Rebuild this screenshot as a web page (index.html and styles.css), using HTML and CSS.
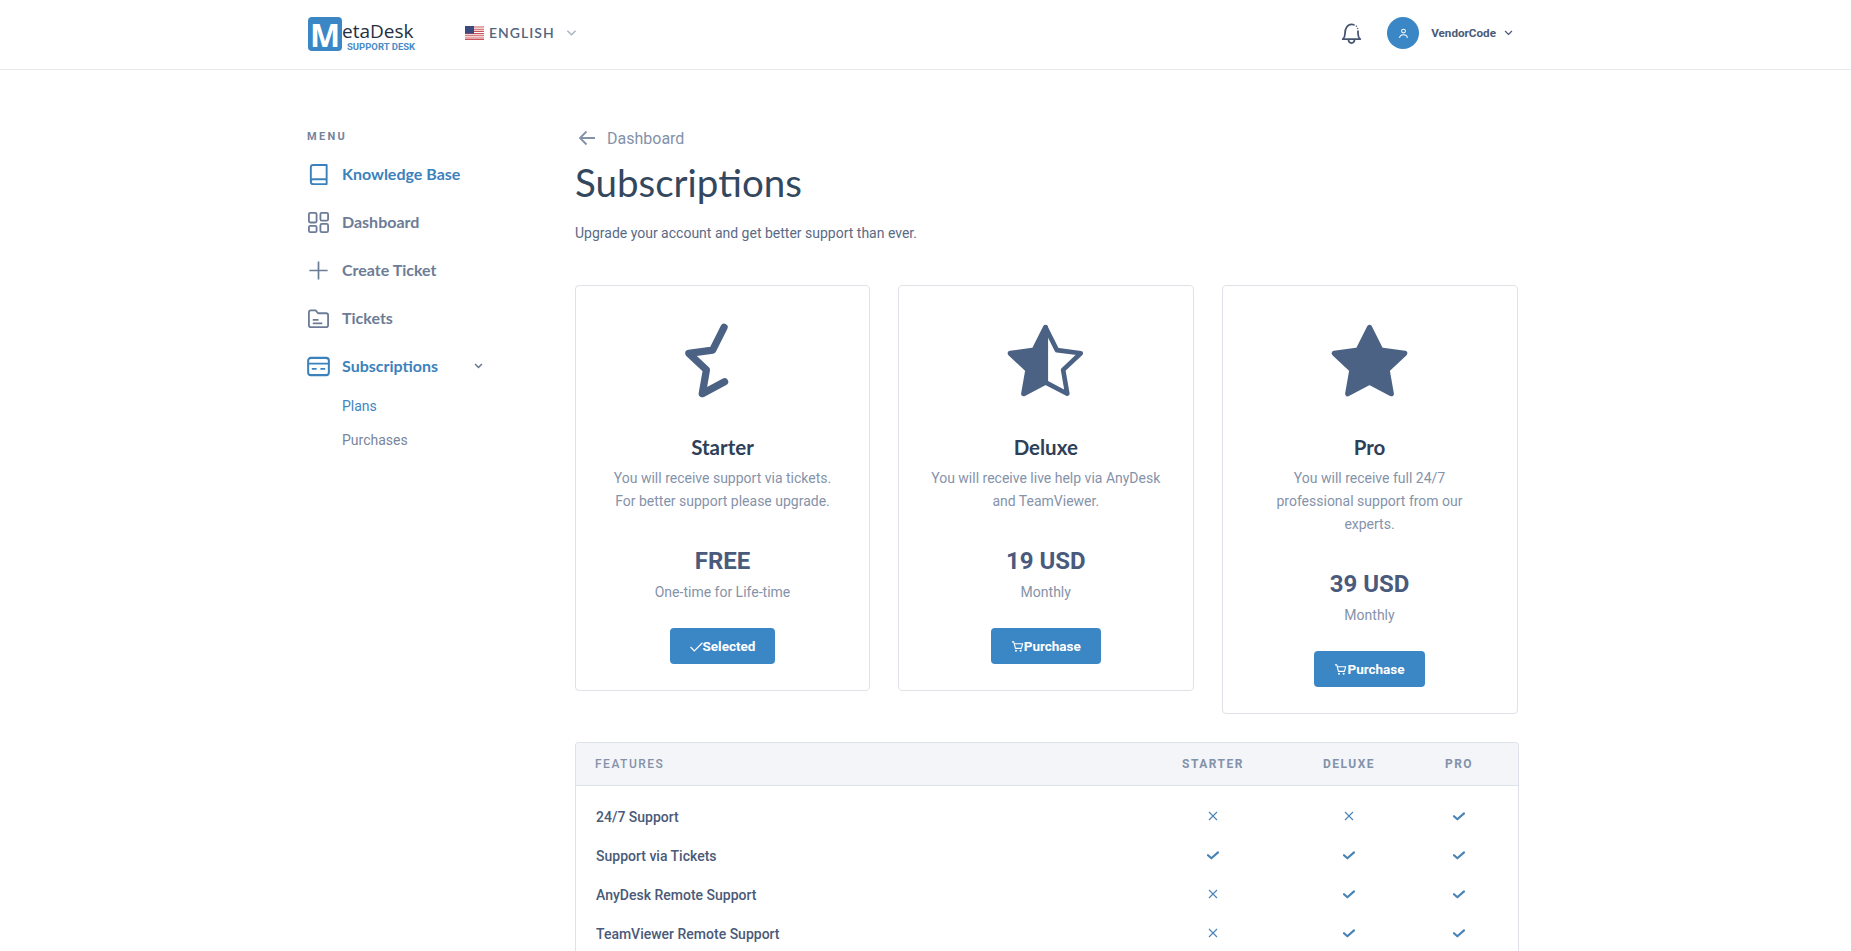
FILE: index.html
```html
<!DOCTYPE html>
<html lang="en">
<head>
<meta charset="utf-8">
<title>Subscriptions</title>
<link rel="stylesheet" href="styles.css">
</head>
<body>
<svg class="defs" width="0" height="0" aria-hidden="true">
  <symbol id="i-x" viewBox="0 0 12 12"><path d="M2 2l8 8M10 2l-8 8" fill="none" stroke="currentColor" stroke-width="1.100"/></symbol>
  <symbol id="i-c" viewBox="0 0 12 12"><path d="M1 6.200l3.400 3.100L11 3.400" fill="none" stroke="currentColor" stroke-width="2.200" stroke-linecap="round" stroke-linejoin="round"/></symbol>
  <symbol id="i-cart" viewBox="0 0 14 14"><path d="M1 2h2l1.800 7h6.400L12.600 4H4" fill="none" stroke="currentColor" stroke-width="1.200" stroke-linejoin="round"/><circle cx="5.400" cy="11.600" r="1.100" fill="currentColor"/><circle cx="10.400" cy="11.600" r="1.100" fill="currentColor"/></symbol>
</svg>
<header class="topbar">
  <div class="topbar-inner">
    <div class="logo">
      <span class="logo-box">M</span>
      <div class="logo-words"><span class="logo-name">etaDesk</span><span class="logo-tag">SUPPORT DESK</span></div>
    </div>
    <div class="lang">
      <svg class="flag" viewBox="0 0 19 14" aria-hidden="true">
        <rect width="19" height="14" fill="#fff"/>
        <path d="M0 1h19M0 3.200h19M0 5.400h19M0 7.600h19M0 9.800h19M0 12h19M0 13.600h19" stroke="#c9545a" stroke-width="1.100"/>
        <rect width="9" height="7.600" fill="#3b4a7e"/>
      </svg>
      <span class="lang-name">ENGLISH</span>
      <svg class="lang-chev" viewBox="0 0 12 8" aria-hidden="true"><path d="M1.500 1.500L6 6l4.500-4.500" fill="none" stroke="currentColor" stroke-width="1.500"/></svg>
    </div>
    <div class="spacer"></div>
    <svg class="bell" viewBox="0 0 20 20" aria-hidden="true"><path d="M3 14.500c1.200-1 1.800-2.400 1.800-4.600C4.800 6 6.800 2.600 10 2.600c.7 0 1.300.1 1.900.4M15.200 8c0 .6 0 1.200 0 1.900 0 2.200.6 3.600 1.800 4.600H3M7.500 15c.2 1.600 1.200 2.600 2.500 2.600s2.300-1 2.500-2.600" fill="none" stroke="currentColor" stroke-width="1.400" stroke-linecap="round" stroke-linejoin="round"/><path d="M13.500 3.800l.8.700M14.800 5.600l.3.800" stroke="currentColor" stroke-width="1"/></svg>
    <span class="avatar"><svg viewBox="0 0 12 12" aria-hidden="true"><circle cx="6" cy="3.400" r="2.100" fill="none" stroke="#fff" stroke-width="1.100"/><path d="M1.800 11c0-2.600 1.800-3.700 4.200-3.700s4.200 1.100 4.200 3.700" fill="none" stroke="#fff" stroke-width="1.100"/></svg></span>
    <span class="user-name">VendorCode</span>
    <svg class="user-chev" viewBox="0 0 10 7" aria-hidden="true"><path d="M1 1.200l4 4 4-4" fill="none" stroke="currentColor" stroke-width="1.500"/></svg>
  </div>
</header>
<div class="page">
  <aside class="side">
    <div class="side-title">MENU</div>
    <nav class="side-nav">
      <a class="nav-item is-active"><svg class="nav-icon" viewBox="0 0 24 24" aria-hidden="true"><path d="M4 19.500V4.500C4 3 5 2 6.500 2h14v20H6.500C5 22 4 21 4 19.500 4 18 5 17 6.500 17h14" fill="none" stroke="currentColor" stroke-width="2" stroke-linejoin="round"/></svg>Knowledge Base</a>
      <a class="nav-item"><svg class="nav-icon" viewBox="0 0 24 24" aria-hidden="true"><g fill="none" stroke="currentColor" stroke-width="1.900"><rect x="2" y="2" width="8" height="10" rx="1.500"/><rect x="14" y="2" width="8" height="8" rx="1.500"/><rect x="2" y="15.500" width="8" height="6.500" rx="1.500"/><rect x="14" y="13.500" width="8" height="8.500" rx="1.500"/></g></svg>Dashboard</a>
      <a class="nav-item"><svg class="nav-icon" viewBox="0 0 24 24" aria-hidden="true"><path d="M12 2.500v19M2.500 12h19" fill="none" stroke="currentColor" stroke-width="1.800"/></svg>Create Ticket</a>
      <a class="nav-item"><svg class="nav-icon" viewBox="0 0 24 24" aria-hidden="true"><path d="M2 5.500C2 4.100 2.900 3.500 4 3.500h5l2.500 3h8.500c1.300 0 2 .8 2 2V19c0 1.300-.8 2-2 2H4c-1.200 0-2-.7-2-2zM6 13.500h6M6 17h10" fill="none" stroke="currentColor" stroke-width="1.900" stroke-linejoin="round"/></svg>Tickets</a>
      <a class="nav-item is-active"><svg class="nav-icon" viewBox="0 0 24 24" aria-hidden="true"><rect x="1.200" y="3" width="21.600" height="18" rx="2.800" fill="none" stroke="currentColor" stroke-width="2.100"/><path d="M1.500 9h21M5 14.500h5M14 14.500h5" fill="none" stroke="currentColor" stroke-width="2"/></svg>Subscriptions<svg class="nav-chev" viewBox="0 0 10 7" aria-hidden="true"><path d="M1 1.200l4 4 4-4" fill="none" stroke="currentColor" stroke-width="1.700"/></svg></a>
    </nav>
    <div class="sub-nav">
      <a class="sub-item is-active">Plans</a>
      <a class="sub-item">Purchases</a>
    </div>
  </aside>
  <main class="content">
    <div class="crumb">
      <svg class="crumb-arrow" viewBox="0 0 18 16" aria-hidden="true"><path d="M17 8H2M8.500 1.500L2 8l6.500 6.500" fill="none" stroke="currentColor" stroke-width="1.800"/></svg>
      <span>Dashboard</span>
    </div>
    <h1 class="title">Subscriptions</h1>
    <p class="lead">Upgrade your account and get better support than ever.</p>
    <section class="plans">
      <article class="plan">
        <svg class="star" viewBox="0 0 80 80" aria-hidden="true"><path d="M41.500 9L30.500 31 7.500 34 24.500 50 20.500 73 42 61.500" fill="none" stroke="currentColor" stroke-width="7" stroke-linecap="round" stroke-linejoin="round"/></svg>
        <h2 class="plan-name">Starter</h2>
        <p class="plan-desc">You will receive support via tickets.<br>For better support please upgrade.</p>
        <div class="plan-price">FREE</div>
        <div class="plan-term">One-time for Life-time</div>
        <a class="btn"><svg class="btn-icon" viewBox="0 0 12 12" aria-hidden="true"><path d="M.5 6.500l3.500 3.500L11.500 2.500" fill="none" stroke="currentColor" stroke-width="1.100"/></svg>Selected</a>
      </article>
      <article class="plan">
        <svg class="star" viewBox="0 0 80 80" aria-hidden="true"><path d="M40 9L29 31 6 34 23 50 19 73 40 62z" fill="currentColor" stroke="currentColor" stroke-width="5" stroke-linejoin="round"/><path d="M40 9L51 31 74 34 57 50 61 73 40 62" fill="none" stroke="currentColor" stroke-width="4.500" stroke-linejoin="round"/></svg>
        <h2 class="plan-name">Deluxe</h2>
        <p class="plan-desc">You will receive live help via AnyDesk<br>and TeamViewer.</p>
        <div class="plan-price">19 USD</div>
        <div class="plan-term">Monthly</div>
        <a class="btn"><svg class="btn-icon" aria-hidden="true"><use href="#i-cart"/></svg>Purchase</a>
      </article>
      <article class="plan">
        <svg class="star" viewBox="0 0 80 80" aria-hidden="true"><path d="M40 9L51 31 74 34 57 50 61 73 40 62 19 73 23 50 6 34 29 31z" fill="currentColor" stroke="currentColor" stroke-width="5" stroke-linejoin="round"/></svg>
        <h2 class="plan-name">Pro</h2>
        <p class="plan-desc">You will receive full 24/7<br>professional support from our<br>experts.</p>
        <div class="plan-price">39 USD</div>
        <div class="plan-term">Monthly</div>
        <a class="btn"><svg class="btn-icon" aria-hidden="true"><use href="#i-cart"/></svg>Purchase</a>
      </article>
    </section>
    <section class="features">
      <div class="f-head">
        <div class="f-label">FEATURES</div><div class="f-plan">STARTER</div><div class="f-plan">DELUXE</div><div class="f-plan">PRO</div>
      </div>
      <div class="f-body">
        <div class="f-row"><div class="f-name">24/7 Support</div><div class="f-cell"><svg class="mark"><use href="#i-x"/></svg></div><div class="f-cell"><svg class="mark"><use href="#i-x"/></svg></div><div class="f-cell"><svg class="mark"><use href="#i-c"/></svg></div></div>
        <div class="f-row"><div class="f-name">Support via Tickets</div><div class="f-cell"><svg class="mark"><use href="#i-c"/></svg></div><div class="f-cell"><svg class="mark"><use href="#i-c"/></svg></div><div class="f-cell"><svg class="mark"><use href="#i-c"/></svg></div></div>
        <div class="f-row"><div class="f-name">AnyDesk Remote Support</div><div class="f-cell"><svg class="mark"><use href="#i-x"/></svg></div><div class="f-cell"><svg class="mark"><use href="#i-c"/></svg></div><div class="f-cell"><svg class="mark"><use href="#i-c"/></svg></div></div>
        <div class="f-row"><div class="f-name">TeamViewer Remote Support</div><div class="f-cell"><svg class="mark"><use href="#i-x"/></svg></div><div class="f-cell"><svg class="mark"><use href="#i-c"/></svg></div><div class="f-cell"><svg class="mark"><use href="#i-c"/></svg></div></div>
      </div>
    </section>
  </main>
</div>
</body>
</html>
```
FILE: styles.css
```css
* { box-sizing: border-box; }
html, body { margin: 0; height: 100vh; overflow: hidden; }
body { background: #fff; font-family: Roboto, sans-serif; color: #4a5a78; }
h1, h2, p { margin: 0; }
a { display: block; }
.defs { display: block; height: 0; }

.topbar { height: 70px; border-bottom: 1px solid #e6e8ec; }
.topbar-inner { width: 1211px; margin-left: 307px; height: 66px; display: flex; align-items: center; }
.spacer { flex: 1; }

.logo { display: flex; align-items: flex-start; width: 158px; height: 34px; margin-top: 1px; }
.logo-box { margin-left: 1px; width: 34px; height: 34px; background: #3b86c4; border-radius: 4px; color: #fff; font: 700 32px/36px "Open Sans", sans-serif; text-align: center; }
.logo-words { display: flex; flex-direction: column; }
.logo-name { font: 400 19px/22px "Open Sans", sans-serif; color: #24303f; margin-top: 3px; }
.logo-tag { font: 700 9.500px/9px Roboto, sans-serif; color: #4a8cc8; margin-left: 5px; margin-top: 0; white-space: nowrap; }

.lang { display: flex; align-items: center; }
.flag { width: 19px; height: 14px; }
.lang-name { font: 600 14px/20px Lato, sans-serif; color: #55657f; letter-spacing: 1px; margin-left: 5px; }
.lang-chev { width: 11px; height: 8px; color: #a8b3c4; margin-left: 11px; }

.bell { width: 25px; height: 25px; color: #47546e; margin-right: 23px; }
.avatar { width: 32px; height: 32px; border-radius: 50%; background: #3b86c4; display: flex; align-items: center; justify-content: center; }
.avatar svg { width: 11px; height: 11px; }
.user-name { font-weight: 700; font-size: 11.700px; color: #4a5a78; margin-left: 12px; }
.user-chev { width: 9px; height: 6px; color: #4a5a78; margin-left: 8px; margin-right: 5px; }

.page { width: 1212px; margin-left: 307px; display: flex; }
.side { width: 268px; padding-top: 60px; }
.side-title { font-weight: 700; font-size: 11px; line-height: 14px; letter-spacing: 2.300px; color: #75849c; }
.side-nav { margin-top: 6px; }
.nav-item { height: 48px; display: flex; align-items: center; font: 700 16px/20px Lato, sans-serif; color: #6d7c96; }
.nav-item.is-active { color: #3b82bd; }
.nav-icon { width: 23px; height: 23px; margin-right: 12px; flex: none; }
.nav-chev { width: 9px; height: 6px; color: #64748f; margin-left: 36px; }
.sub-nav { margin-top: -1px; padding-left: 35px; }
.sub-item { height: 34px; line-height: 34px; font-size: 14px; color: #78869e; }
.sub-item.is-active { color: #3f86bf; }

.content { width: 944px; padding-top: 58px; }
.crumb { display: flex; align-items: center; height: 20px; font-size: 16px; color: #8391a9; }
.crumb-arrow { width: 18px; height: 16px; margin-left: 3px; margin-right: 11px; }
.title { font: 400 38.500px/50px Lato, sans-serif; color: #33475f; margin-top: 9px; }
.lead { font-size: 14px; line-height: 20px; color: #5a6a85; margin-top: 16px; }

.plans { display: grid; grid-template-columns: 295px 295.500px 296px; gap: 28px; align-items: start; margin-top: 42px; }
.plan { border: 1px solid #e0e2e8; border-radius: 4px; padding: 32px 16px 26px; display: flex; flex-direction: column; align-items: center; text-align: center; }
.star { width: 83px; height: 83px; color: #4c6285; }
.plan-name { font: 700 20.500px/24px Lato, sans-serif; color: #2e3f58; margin-top: 34px; }
.plan-desc { font-size: 14px; line-height: 23px; color: #8593aa; margin-top: 8px; }
.plan-price { font-weight: 700; font-size: 24px; line-height: 30px; color: #4a5a7c; margin-top: 33px; }
.plan-term { font-size: 14px; line-height: 22px; color: #8593aa; margin-top: 5px; }
.btn { height: 36px; padding: 0 20px; margin-top: 25px; background: #3b86c4; border-radius: 4px; color: #fff; font-weight: 700; font-size: 13.500px; display: flex; align-items: center; }
.btn-icon { width: 13px; height: 13px; flex: none; }

.features { margin-top: 28px; border: 1px solid #dfe1ea; border-bottom: 0; border-radius: 4px 4px 0 0; height: 300px; }
.f-head, .f-row { display: grid; grid-template-columns: 1fr 136px 136px 84px; padding: 0 17px 0 20px; align-items: center; }
.f-head { height: 43px; padding-left: 19px; background: #f4f5f9; border-bottom: 1px solid #dfe1ea; border-radius: 4px 4px 0 0; font-weight: 700; font-size: 12px; letter-spacing: 1.500px; color: #8392a9; }
.f-label { font-weight: 500; }
.f-plan { text-align: center; }
.f-body { padding-top: 11px; }
.f-row { height: 39px; }
.f-name { font-weight: 500; font-size: 14px; color: #4a5a78; }
.f-cell { display: flex; justify-content: center; }
.mark { width: 12px; height: 12px; color: #4a83b5; margin-top: -2px; }
```
